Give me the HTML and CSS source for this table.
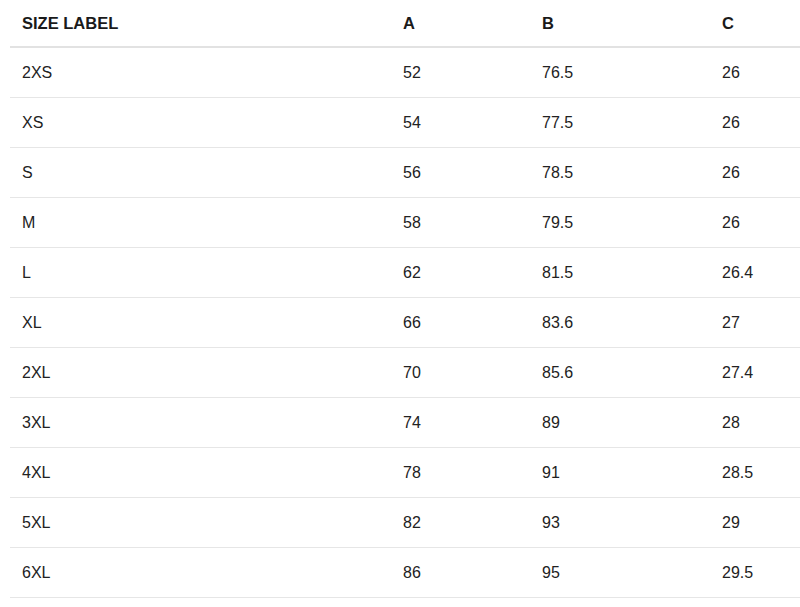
FILE: index.html
```html
<!DOCTYPE html>
<html>
<head>
<meta charset="utf-8">
<link rel="stylesheet" href="styles.css">
</head>
<body>
<table class="size-table">
  <colgroup>
    <col class="c-label"><col class="c-a"><col class="c-b"><col class="c-c">
  </colgroup>
  <thead>
    <tr><th>SIZE LABEL</th><th>A</th><th>B</th><th>C</th></tr>
  </thead>
  <tbody>
    <tr><td>2XS</td><td>52</td><td>76.5</td><td>26</td></tr>
    <tr><td>XS</td><td>54</td><td>77.5</td><td>26</td></tr>
    <tr><td>S</td><td>56</td><td>78.5</td><td>26</td></tr>
    <tr><td>M</td><td>58</td><td>79.5</td><td>26</td></tr>
    <tr><td>L</td><td>62</td><td>81.5</td><td>26.4</td></tr>
    <tr><td>XL</td><td>66</td><td>83.6</td><td>27</td></tr>
    <tr><td>2XL</td><td>70</td><td>85.6</td><td>27.4</td></tr>
    <tr><td>3XL</td><td>74</td><td>89</td><td>28</td></tr>
    <tr><td>4XL</td><td>78</td><td>91</td><td>28.5</td></tr>
    <tr><td>5XL</td><td>82</td><td>93</td><td>29</td></tr>
    <tr><td>6XL</td><td>86</td><td>95</td><td>29.5</td></tr>
  </tbody>
</table>
</body>
</html>
```

FILE: styles.css
```css
html, body {
  margin: 0;
  padding: 0;
  background: #fff;
}
body {
  padding-left: 10px;
  font-family: "Liberation Sans", Arial, sans-serif;
  color: #222;
}
.size-table {
  width: 790px;
  border-collapse: collapse;
  table-layout: fixed;
}
.c-label { width: 381px; }
.c-a { width: 139px; }
.c-b { width: 180px; }
.c-c { width: 90px; }
.size-table th {
  text-align: left;
  font-weight: 700;
  font-size: 16.5px;
  color: #1a1a1a;
  height: 47px;
  padding: 1px 12px 0;
  box-sizing: border-box;
  border-bottom: 2px solid #e2e2e2;
  vertical-align: middle;
}
.size-table td {
  font-size: 16px;
  height: 50px;
  padding: 2px 12px 0;
  box-sizing: border-box;
  border-bottom: 1px solid #e6e6e6;
  vertical-align: middle;
}
```
